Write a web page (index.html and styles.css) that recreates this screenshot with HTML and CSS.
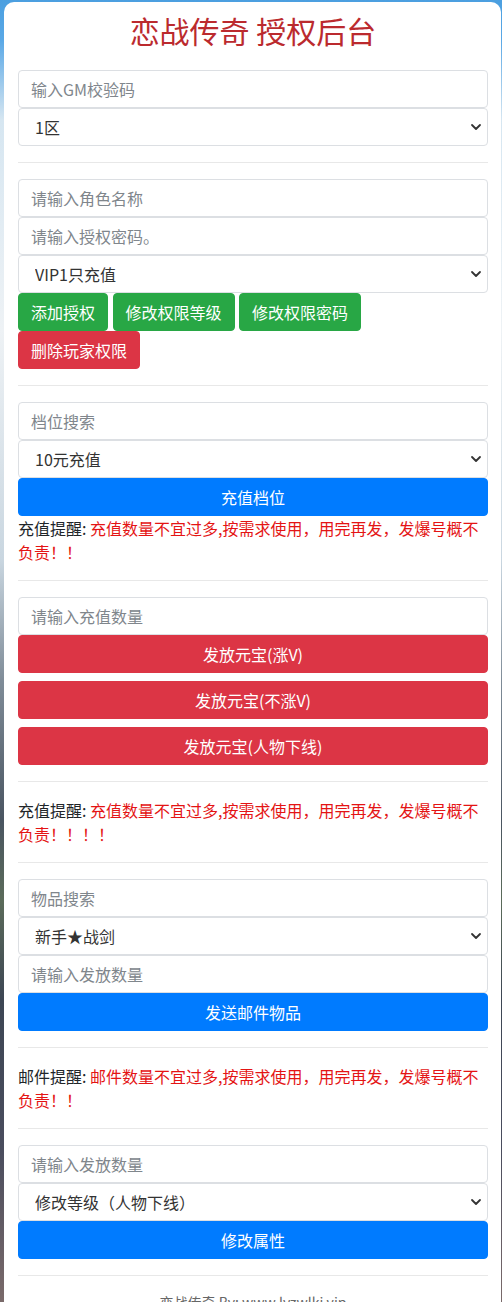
FILE: index.html
```html
<!DOCTYPE html>
<html lang="zh-CN">
<head>
<meta charset="utf-8">
<title>恋战传奇 授权后台</title>
<link rel="stylesheet" href="styles.css">
</head>
<body>
<div class="panel">
  <h1 class="title">恋战传奇 授权后台</h1>

  <div class="stack">
    <input class="field" type="text" placeholder="输入GM校验码">
    <select class="field select"><option>1区</option></select>
  </div>
  <hr class="rule">

  <div class="stack">
    <input class="field" type="text" placeholder="请输入角色名称">
    <input class="field" type="text" placeholder="请输入授权密码。">
    <select class="field select"><option>VIP1只充值</option></select>
    <div class="btn-row">
      <button class="btn green">添加授权</button>
      <button class="btn green">修改权限等级</button>
      <button class="btn green">修改权限密码</button>
    </div>
    <div class="btn-row">
      <button class="btn red">删除玩家权限</button>
    </div>
  </div>
  <hr class="rule">

  <div class="stack">
    <input class="field" type="text" placeholder="档位搜索">
    <select class="field select"><option>10元充值</option></select>
    <button class="btn blue block">充值档位</button>
    <p class="note">充值提醒: <span class="warn">充值数量不宜过多,按需求使用，用完再发，发爆号概不负责！！</span></p>
  </div>
  <hr class="rule">

  <div class="stack">
    <input class="field" type="text" placeholder="请输入充值数量">
    <div class="btn-col">
      <button class="btn red block">发放元宝(涨V)</button>
      <button class="btn red block">发放元宝(不涨V)</button>
      <button class="btn red block">发放元宝(人物下线)</button>
    </div>
  </div>
  <hr class="rule">
  <p class="note">充值提醒: <span class="warn">充值数量不宜过多,按需求使用，用完再发，发爆号概不负责！！！！</span></p>
  <hr class="rule">

  <div class="stack">
    <input class="field" type="text" placeholder="物品搜索">
    <select class="field select"><option>新手★战剑</option></select>
    <input class="field" type="text" placeholder="请输入发放数量">
    <button class="btn blue block">发送邮件物品</button>
  </div>
  <hr class="rule">
  <p class="note">邮件提醒: <span class="warn">邮件数量不宜过多,按需求使用，用完再发，发爆号概不负责！！</span></p>
  <hr class="rule">

  <div class="stack">
    <input class="field" type="text" placeholder="请输入发放数量">
    <select class="field select"><option>修改等级（人物下线）</option></select>
    <button class="btn blue block">修改属性</button>
  </div>
  <hr class="rule">
  <p class="footer">恋战传奇 By: www.lyzwlki.vip</p>
</div>
</body>
</html>
```
FILE: styles.css
```css
* { box-sizing: border-box; }

html, body {
  margin: 0;
  padding: 0;
}

body {
  font-family: "Noto Sans CJK SC", "Noto Sans", sans-serif;
  font-size: 16px;
  line-height: 1.5;
  color: #212529;
  background: linear-gradient(180deg, #4b9fe0 0px, #5aa8e6 40px, #d6e6f1 120px, #eef2f5 330px, #c9d6e0 560px, #7f8c98 680px, #4a5561 820px, #5b6b5a 900px, #3d4654 1000px, #4a4d5e 1150px, #7a6a6a 1302px);
  min-height: 1302px;
}

.panel {
  margin: 2px 1px 0 4px;
  padding: 10px 13px 20px 14px;
  background: #ffffff;
  border-radius: 10px;
}

.title {
  margin: 0 0 22px;
  text-align: center;
  font-size: 30px;
  line-height: 36px;
  font-weight: 400;
  color: #bb2a2e;
}

.stack {
  display: flex;
  flex-direction: column;
}

.field {
  display: block;
  width: 100%;
  height: 38px;
  padding: 6px 12px;
  font-family: inherit;
  font-size: 16px;
  line-height: 24px;
  color: #333;
  background-color: #fff;
  border: 1px solid #dcdfe3;
  border-radius: 4px;
  outline: none;
}

.field::placeholder {
  color: #80868c;
}

.select {
  -webkit-appearance: none;
  appearance: none;
  padding-left: 16px;
  padding-right: 30px;
  background-image: url("data:image/svg+xml;utf8,<svg xmlns='http://www.w3.org/2000/svg' width='12' height='8' viewBox='0 0 12 8'><path d='M2 2l4 4 4-4' fill='none' stroke='%23333' stroke-width='1.8' stroke-linecap='round' stroke-linejoin='round'/></svg>");
  background-repeat: no-repeat;
  background-position: right 5px center;
  background-size: 12px 8px;
}

.btn {
  display: inline-block;
  height: 38px;
  padding: 6px 12px;
  font-family: inherit;
  font-size: 16px;
  line-height: 24px;
  color: #fff;
  border: 1px solid transparent;
  border-radius: 4px;
  cursor: pointer;
  white-space: nowrap;
}

.block {
  display: block;
  width: 100%;
  text-align: center;
}

.green { background-color: #28a745; border-color: #28a745; }
.red { background-color: #dc3545; border-color: #dc3545; }
.blue { background-color: #007bff; border-color: #007bff; }

.btn-row {
  display: flex;
  flex-wrap: wrap;
  column-gap: 4.5px;
}

.btn-col {
  display: flex;
  flex-direction: column;
  gap: 8px;
}

.rule {
  margin: 16px 0;
  border: 0;
  border-top: 1px solid rgba(0, 0, 0, 0.09);
}

.note {
  margin: 0;
  line-height: 24px;
}

.warn {
  color: #e41414;
}

.footer {
  margin: 0;
  text-align: center;
  font-size: 14px;
  line-height: 21px;
  color: #666;
}
```
